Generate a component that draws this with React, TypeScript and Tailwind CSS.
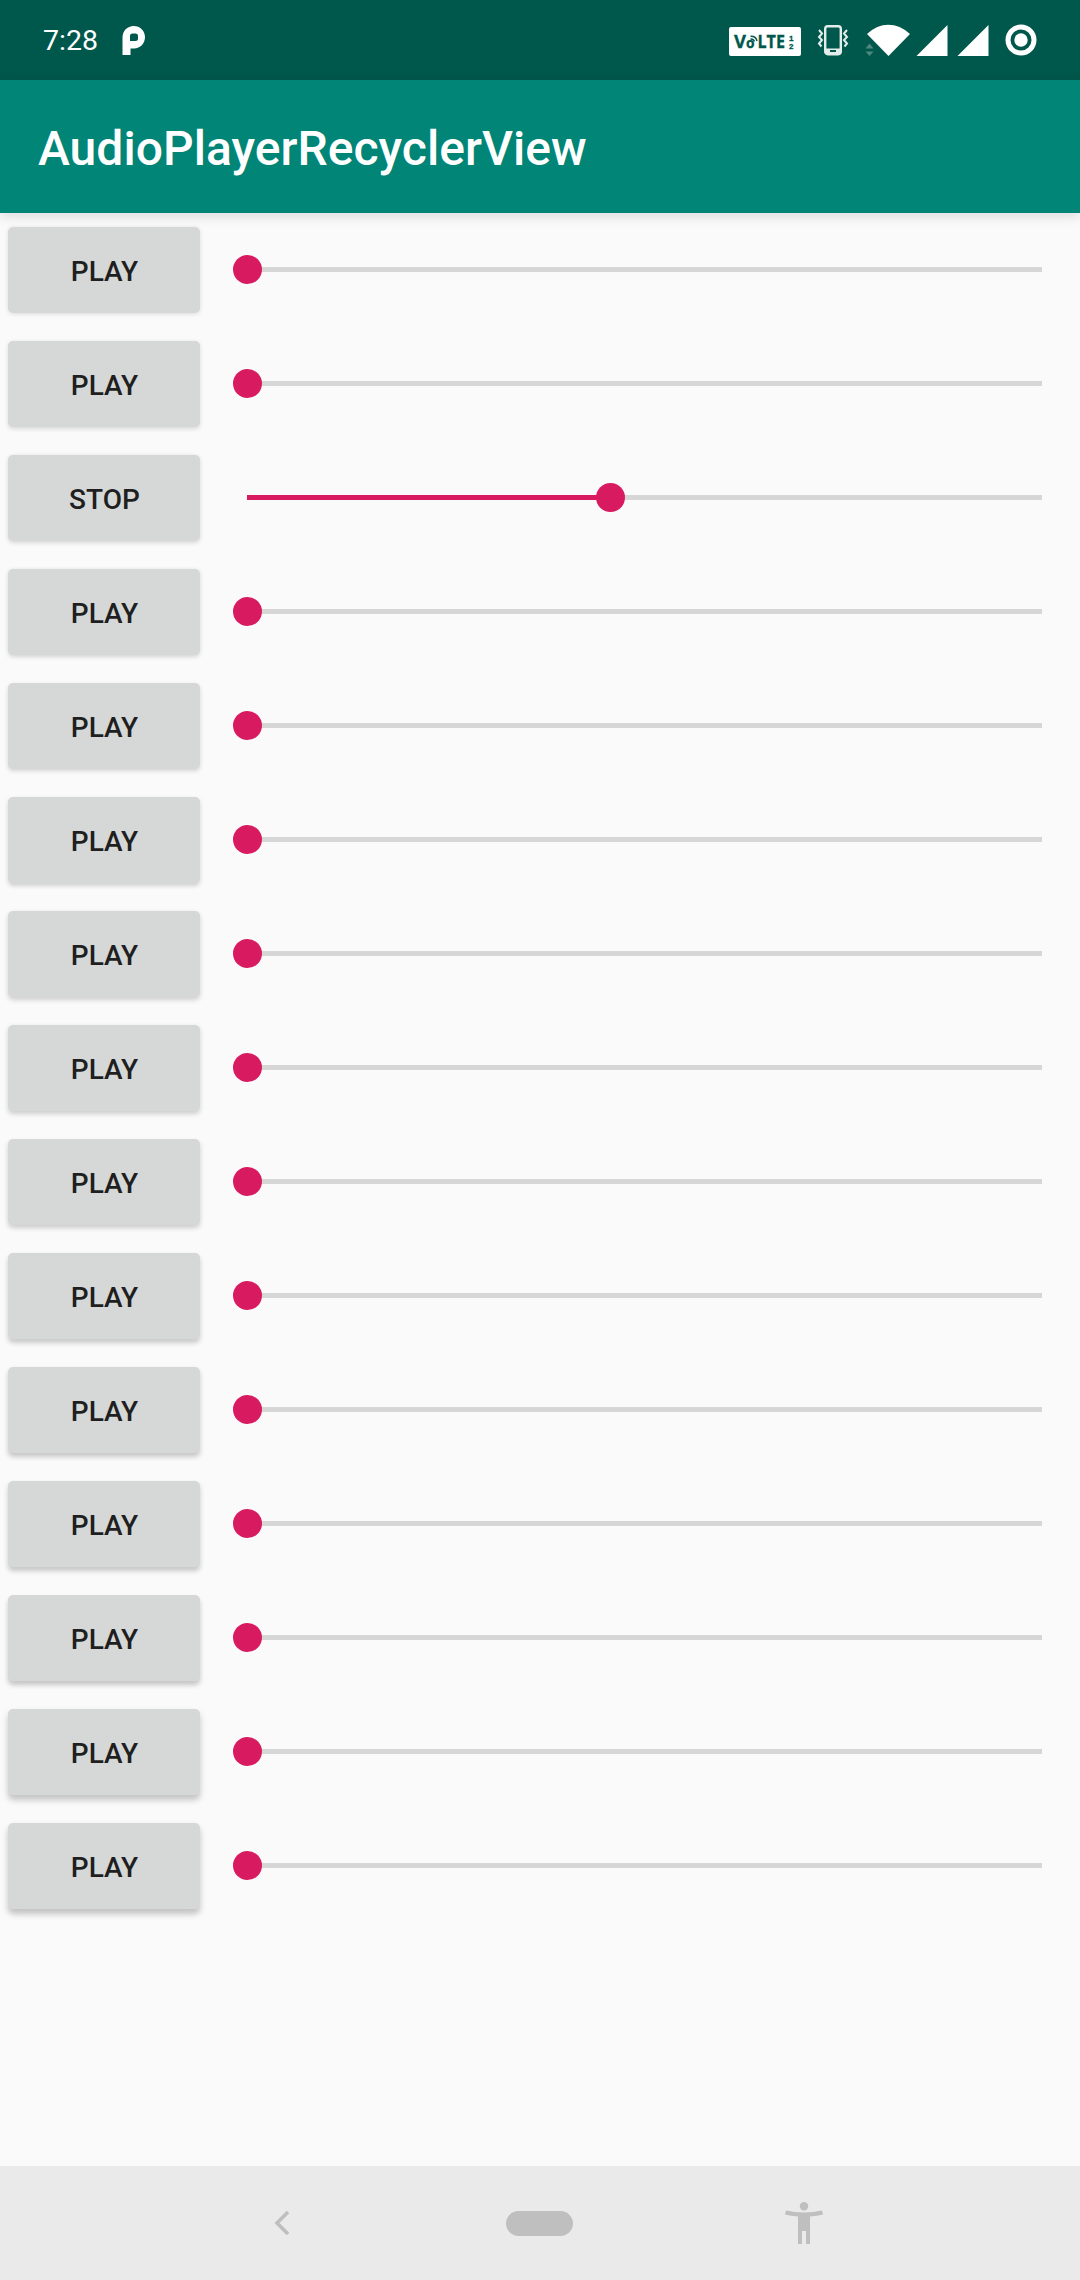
const tracks = Array.from({ length: 15 }, (_, i) => ({
  id: i,
  playing: i === 2,
  position: i === 2 ? 363 / 795 : 0,
}));

function StatusBar() {
  return (
    <div className="flex h-20 shrink-0 items-center bg-[#00574b] pl-[43px] text-white">
      <span className="w-[79px] pt-[2px] text-[28.5px] leading-none">7:28</span>
      <svg className="h-[29px] w-[24px]" viewBox="0 0 24 29" fill="white">
        <path
          fillRule="evenodd"
          d="M0.5 29V11.5C0.5 5 5.3 0 11.7 0C18 0 23 4.8 23 11C23 17.5 18.3 22.5 12 22.5H8.5V29ZM10.5 7.5H13.5Q16 7.5 16 10V12.5Q16 15 13.5 15H8V10Q8 7.5 10.5 7.5Z"
        />
      </svg>
      <div className="ml-auto flex items-center pr-[43px]">
        <svg className="mt-[3px] h-[29px] w-[72px]" viewBox="0 0 72 29">
          <rect width="72" height="29" rx="2" fill="white" />
          <g fill="#00574b" stroke="#00574b" strokeWidth="0.3" fontFamily="'Open Sans', sans-serif" fontWeight="700">
            <text x="5" y="20.8" fontSize="17.5" textLength="12" lengthAdjust="spacingAndGlyphs">V</text>
            <text x="17" y="20.8" fontSize="14" textLength="8.5" lengthAdjust="spacingAndGlyphs">o</text>
            <text x="28.5" y="20.8" fontSize="17.5" textLength="27.5" lengthAdjust="spacingAndGlyphs">LTE</text>
            <g fontFamily="'Liberation Sans', sans-serif" fontSize="8">
              <text x="60" y="13.5">1</text>
              <text x="60" y="22">2</text>
            </g>
          </g>
          <path d="M21.5 12Q24.5 11.8 25.5 14.5M21.5 9.2Q27 9 28 14" fill="none" stroke="#00574b" strokeWidth="1.5" />
        </svg>
        <svg className="ml-[16px] h-[32px] w-[32px]" viewBox="0 0 32 32" fill="none" stroke="#e3edeb">
          <rect x="8.2" y="2.2" width="15.6" height="28" rx="2.6" strokeWidth="2.4" />
          <path d="M8 24.5H24V30H8Z" fill="#e3edeb" stroke="none" />
          <path d="M13 27H19" stroke="#00574b" strokeWidth="2" />
          <path d="M2 6L5 9.5L2 13L5 16L2 19.5L4.5 22.5M30 6L27 9.5L30 13L27 16L30 19.5L27.5 22.5" strokeWidth="2" />
        </svg>
        <svg className="ml-[16px] h-[32px] w-[45px]" viewBox="0 0 45 32" fill="white">
          <path d="M2 10Q12 0.8 23.2 0.8Q35 0.8 45 10L23.5 32Z" />
          <path d="M0.5 24.5L4.5 19.5L8.5 24.5ZM0.5 27.5L4.5 32L8.5 27.5Z" fill="#4d8981" />
        </svg>
        <svg className="ml-[6px] h-[31px] w-[32px]" viewBox="0 0 32 31" fill="white">
          <path d="M0.5 31L31.5 0V31Z" />
        </svg>
        <svg className="ml-[9px] h-[31px] w-[32px]" viewBox="0 0 32 31" fill="white">
          <path d="M0.5 31L31.5 0V31Z" />
        </svg>
        <svg className="ml-[16px] h-[32px] w-[32px]" viewBox="0 0 32 32">
          <circle cx="16" cy="16" r="13" fill="none" stroke="white" strokeWidth="5" />
          <circle cx="16" cy="16" r="6.7" fill="white" />
        </svg>
      </div>
    </div>
  );
}

function SeekBar({ position }: { position: number }) {
  return (
    <div className="relative mt-[54px] mr-[38px] ml-[47px] h-[5px] flex-1 bg-[#d6d6d6]">
      <div className="h-full bg-[#d81b60]" style={{ width: `${position * 100}%` }} />
      <div
        className="absolute -top-3 -ml-[14px] size-[29px] rounded-full bg-[#d81b60]"
        style={{ left: `${position * 100}%` }}
      />
    </div>
  );
}

function TrackRow({ playing, position, depth }: { playing: boolean; position: number; depth: number }) {
  return (
    <li className="flex h-[114px] items-start pl-2">
      <button
        className="mt-[14px] h-[86px] w-48 rounded-[5px] bg-[#d6d8d7] pt-[3px] pl-px text-[28px] font-medium text-[#1e1f1e]"
        style={{
          boxShadow: `0 ${1 + depth * 0.25}px ${4 + depth * 0.15}px rgba(0,0,0,${0.13 + depth * 0.007})`,
        }}
      >
        {playing ? "STOP" : "PLAY"}
      </button>
      <SeekBar position={position} />
    </li>
  );
}

function NavigationBar() {
  return (
    <div className="flex h-[114px] shrink-0 items-center bg-[#eaeaea] pl-[274px]">
      <svg className="h-6 w-4" viewBox="0 0 16 24" fill="none" stroke="#bfbfbf" strokeWidth="3.6">
        <path d="M14 1L3 12L14 23" />
      </svg>
      <div className="ml-[216px] h-[25px] w-[67px] rounded-full bg-[#bfbfbf]" />
      <svg className="ml-[212px] h-[42px] w-[38px]" viewBox="0 0 38 42" fill="#bfbfbf">
        <circle cx="19" cy="4.2" r="4.2" />
        <path d="M1 8.5Q19 12.5 37 8.5L38 12.5Q32 14 25 14.6V42H21V29H17V42H13V14.6Q6 14 0 12.5Z" />
      </svg>
    </div>
  );
}

export default function App() {
  return (
    <div className="flex h-[2280px] w-[1080px] flex-col overflow-hidden bg-[#fafafa] font-['Roboto',sans-serif]">
      <StatusBar />
      <header className="flex h-[133px] shrink-0 items-center bg-[#008577] pt-1 pl-[38px] shadow-[0_3px_12px_rgba(0,0,0,0.13)]">
        <h1 className="text-[48px] leading-none font-medium tracking-[0.04px] text-white">AudioPlayerRecyclerView</h1>
      </header>
      <ul className="flex-1">
        {tracks.map((track) => (
          <TrackRow key={track.id} playing={track.playing} position={track.position} depth={track.id} />
        ))}
      </ul>
      <NavigationBar />
    </div>
  );
}
